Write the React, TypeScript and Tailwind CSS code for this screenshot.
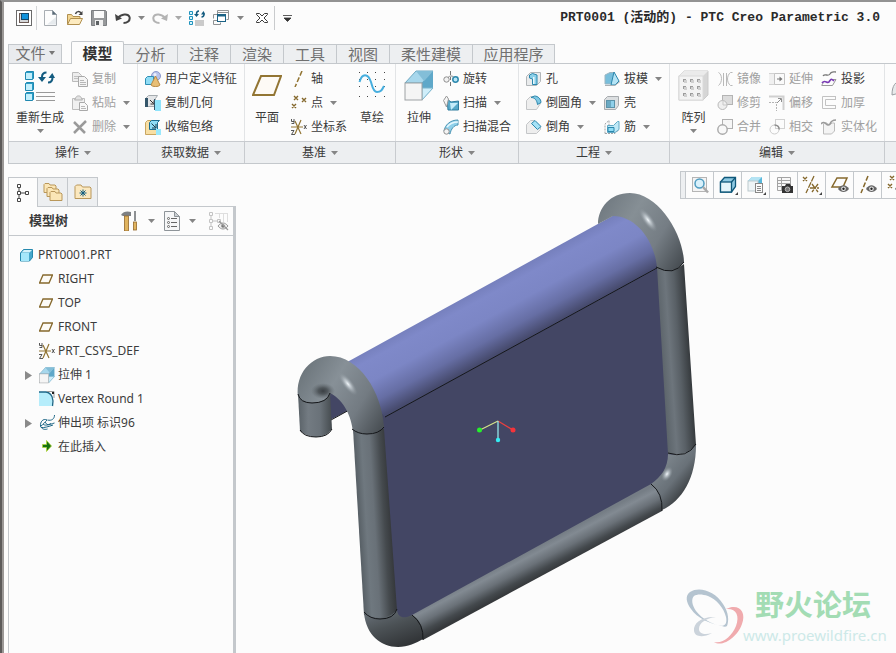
import React from "react";

type IconProps = { w?: number; h?: number; children: React.ReactNode };

function Svg({ w = 16, h = 16, children }: IconProps) {
  return (
    <svg width={w} height={h} viewBox={`0 0 ${w} ${h}`} fill="none" className="shrink-0" aria-hidden="true">
      {children}
    </svg>
  );
}

function Caret({ dim = false }: { dim?: boolean }) {
  return (
    <svg width="7" height="4" viewBox="0 0 7 4" className="shrink-0" aria-hidden="true">
      <path d="M0 0h7L3.5 4z" fill={dim ? "#a9a9a9" : "#858585"} />
    </svg>
  );
}

/* ---------- quick access icons ---------- */

const LogoIcon = () => (
  <Svg>
    <rect x="0.5" y="0.5" width="15" height="15" stroke="#6a6a6a" fill="#fff" />
    <rect x="3.500" y="3.500" width="9" height="9" stroke="#6b5a55" fill="#d4d6d8" />
    <rect x="5.500" y="3.500" width="7" height="6" fill="#1193dc" stroke="#14496b" />
  </Svg>
);
const NewIcon = () => (
  <Svg w={14}>
    <path d="M.5.5h8l4 4v11H.5z" fill="#fdfdfd" stroke="#a9aeb3" />
    <path d="M8.500.5v4h4z" fill="#5b6b78" stroke="#8a959e" />
    <path d="M3 14.500h9V7z" fill="#e6eaed" />
  </Svg>
);
const OpenIcon = () => (
  <Svg>
    <path d="M.5 14.500v-10h4l1.500 2h7v3" fill="#f3d693" stroke="#b08f4f" />
    <path d="M.5 14.500l3-6h12l-3 6z" fill="#fdebc0" stroke="#b08f4f" />
    <path d="M8.500 4c1-3 4-3 5.500-1" stroke="#444" strokeWidth="1.500" />
    <path d="M15.500 1v4h-4z" fill="#444" />
  </Svg>
);
const SaveIcon = () => (
  <Svg>
    <path d="M.5.5h14l1 1v14H.5z" fill="#97999b" stroke="#7c7f82" />
    <rect x="3" y="1" width="10" height="7" fill="#fafafa" />
    <rect x="4" y="10" width="8" height="6" fill="#f1f1f1" />
    <rect x="5" y="11" width="3" height="4" fill="#5e6265" />
  </Svg>
);
const UndoIcon = ({ color }: { color: string }) => (
  <Svg>
    <path d="M3 8c3-4 10-5 11.500-1 1 4-2.500 6-6 6" stroke={color} strokeWidth="2" />
    <path d="M0 4l1 7 6-2.500z" fill={color} />
  </Svg>
);
const RedoIcon = ({ color }: { color: string }) => (
  <Svg>
    <path d="M13 8C10 4 3 3 1.500 7c-1 4 2.500 6 6 6" stroke={color} strokeWidth="2" />
    <path d="M16 4l-1 7-6-2.500z" fill={color} />
  </Svg>
);
const WindowsIcon = () => (
  <Svg>
    <path d="M4.500 5V.5h11v9h-2M15.500 2.500h-11" stroke="#8f9294" />
    <path d="M.5 4.500h4M.5 4.500v4M.5 14.500v-4h4M.5 14.500h7v-2" stroke="#8f9294" />
    <rect x="4.500" y="4.500" width="8" height="7" fill="#fff" stroke="#1a6285" />
    <path d="M4 5.500h9" stroke="#1a6285" strokeWidth="2" />
  </Svg>
);
const CloseIcon = () => (
  <Svg w={12} h={12}>
    <path d="M.5 1.500h3L6 4l2.500-2.500h3v1L8 6l3.500 3.500v1h-3L6 8l-2.500 2.500h-3v-1L4 6 .5 2.500z" stroke="#3c3c3c" fill="#fff" />
  </Svg>
);
const RegenIcon = () => (
  <Svg>
    <path d="M.5 1.500h3v3h-3zM.5 6.500h3v3h-3zM.5 11.500h3v3h-3z" fill="#d5f4fd" stroke="#1e93bd" />
    <path d="M6 11h9M6 13h9M6 15h9" stroke="#999" />
    <path d="M10 1C8 1 7.500 2.500 7.500 4M12.500 7c2 0 2.500-1.500 2.500-3" stroke="#145c80" strokeWidth="1.500" />
    <path d="M5 4h5L7.500 7zM12 4.500h4.500L14.500 1z" fill="#145c80" />
  </Svg>
);
const RegenBigIcon = () => (
  <Svg w={30} h={32}>
    {[1, 12, 22].map((y) => (
      <g key={y}>
        <path d={`M.5 ${y + 1.5}l1-1h7v7l-1 1h-7z`} fill="#2a9cc6" stroke="#2089b0" />
        <rect x="1" y={y + 2} width="6" height="6" fill="#c3effc" />
      </g>
    ))}
    <path d="M11 22.500h19M11 26.500h19M11 30.500h19" stroke="#999" />
    <path d="M21.500 2.500C18 2.500 17 4.500 17 7M23 12.500c3.500 0 4.500-2 4.500-5" stroke="#145c80" strokeWidth="2" />
    <path d="M13 7h8l-4 5zM23.500 8H30l-2.700-5z" fill="#145c80" />
  </Svg>
);

/* ---------- ribbon icons ---------- */

const CopyIcon = () => (
  <Svg>
    <path d="M.5 1.500h6l3 3v6h-9z" fill="#ededed" stroke="#bababa" />
    <path d="M2 5.500h5M2 7.500h5" stroke="#c0c0c0" />
    <path d="M6.500 5.500h6l3 3v7h-9z" fill="#f4f4f4" stroke="#a9a9a9" />
    <path d="M8 9.500h4M8 11.500h6M8 13.500h6" stroke="#b6b6b6" />
  </Svg>
);
const PasteIcon = () => (
  <Svg>
    <path d="M.5 3.500h12v11H.5z" fill="#f0f0f0" stroke="#bdbdbd" />
    <path d="M3.500 3.500C4 0 9 0 9.500 3.500l1 1.500h-8z" fill="#e2e2e2" stroke="#b0b0b0" />
    <path d="M7.500 7.500h5l3 3v5h-8z" fill="#f8f8f8" stroke="#a9a9a9" />
    <path d="M9 11.500h4M9 13.500h5" stroke="#b8b8b8" />
  </Svg>
);
const DeleteIcon = () => (
  <Svg>
    <path d="M2 3l11 11M14 2L2 14" stroke="#9a9a9a" strokeWidth="2.500" />
  </Svg>
);
const UdfIcon = () => (
  <Svg>
    <circle cx="11" cy="5" r="4.500" fill="#b9c3ea" stroke="#8c98cc" />
    <circle cx="10" cy="3.500" r="1.500" fill="#eef1fc" />
    <path d="M.5 7.500l2-2h6v6l-2 2h-6z" fill="#8fdcf5" stroke="#2f8fb4" />
    <path d="M10.500 5l4.500 9c-1 2-8 2-9 0z" fill="#e8bf76" stroke="#b98a44" />
  </Svg>
);
const CopyGeomIcon = () => (
  <Svg>
    <path d="M.5 3.500l3-3h9l-2 3v8H.5z" fill="#e4e6e8" stroke="#a5abaf" />
    <rect x="0" y="3" width="3" height="9" fill="#35566a" />
    <path d="M5 5l3.500 3.500M9 5.500V9H5.500" stroke="#333" />
    <rect x="10" y="5" width="6" height="11" fill="#8fe3fb" />
    <path d="M9.500 4v11" stroke="#35566a" />
  </Svg>
);
const ShrinkIcon = () => (
  <Svg>
    <path d="M.5 3.500l2-2h4v9H13v5H.5z" fill="#f8dfa4" stroke="#c9a660" />
    <path d="M4.500 3.500l2-2h8l-2 2v7h-8z" fill="#8fdcf5" stroke="#1c6d90" />
    <path d="M6.500 4.500l4 4M11 5v4H7" stroke="#1b3b4b" />
    <rect x="11" y="10" width="5" height="6" fill="#9ae8fc" />
  </Svg>
);
const PlaneIcon = ({ big = false }: { big?: boolean }) =>
  big ? (
    <Svg w={30} h={32}>
      <path d="M9 6h20l-7 19H1z" stroke="#927533" strokeWidth="2" fill="#fdfaf5" />
    </Svg>
  ) : (
    <Svg w={14} h={10}>
      <path d="M4 1h9.500L10 9H.5z" stroke="#85682c" strokeWidth="1.300" fill="#fdfbf6" />
    </Svg>
  );
const AxisIcon = () => (
  <Svg>
    <path d="M11 0L4 16" stroke="#927533" strokeWidth="1.500" strokeDasharray="5 2" />
  </Svg>
);
const PointIcon = () => (
  <Svg>
    <path d="M3 1l4 4M7 1L3 5M11 3l4 4M15 3l-4 4M1 9l4 4M5 9l-4 4" stroke="#85682c" strokeWidth="1.400" />
  </Svg>
);
const CsysIcon = () => (
  <Svg>
    <path d="M0 8h12M4 2l6 13M10 1L4 15" stroke="#927533" strokeWidth="1.200" />
    <path d="M.5 0v2.500h2.500M3 0v4.500H.5M0 11.500h3L.5 15.500H4M13 6l2.500 4M15.500 6L13 10" stroke="#444" strokeWidth=".9" />
  </Svg>
);
const SketchIcon = () => (
  <Svg w={28} h={32}>
    {[2, 9, 16, 26].flatMap((y) =>
      [1, 9, 17, 26].map((x) => <rect key={`${x}-${y}`} x={x} y={y} width="1" height="1" fill="#444" />)
    )}
    <path d="M1.500 12C4 3 10 3 13 12c1 3 2 10 6 10 4 0 5-2 7-6" stroke="#46aede" strokeWidth="2" />
  </Svg>
);
const ExtrudeIcon = ({ big = false }: { big?: boolean }) => (
  <svg width={big ? 30 : 16} height={big ? 32 : 17} viewBox="0 0 30 32" fill="none" aria-hidden="true">
    <path d="M1 13L12 1h17L18 13z" fill="#a7d7ec" stroke="#6fa9c2" />
    <path d="M18 13L29 1v17L18 30z" fill="#5fa8c9" />
    <path d="M29 18L18 30V18z" fill="#cfeefa" stroke="#7db6ce" />
    <path d="M12 1l8 10 9-10z" fill="#83bed8" />
    <rect x="1" y="13" width="17" height="17" fill="#f5f5f5" stroke="#9da1a4" />
  </svg>
);
const RevolveIcon = () => (
  <Svg>
    <circle cx="3.500" cy="8.500" r="2.700" fill="#f2f2f2" stroke="#8f8f8f" />
    <circle cx="12.500" cy="8.500" r="2.700" fill="#b9e6f6" stroke="#2b87ad" strokeWidth="1.500" />
    <path d="M7.500 0v4M7.500 6v3M7.500 11v4" stroke="#777" />
    <path d="M5 6.500c2-2 4-2 5.500-.5" stroke="#888" />
  </Svg>
);
const SweepIcon = () => (
  <Svg>
    <path d="M4 4l4 3 7.500-1v9H5z" fill="#58a9c9" stroke="#2e7c9e" />
    <path d="M7 8h8l-7 7z" fill="#c4ecfa" />
    <path d="M.5 5.500l3-4.500 2 3-2 8z" fill="#f5f5f5" stroke="#9a9a9a" />
  </Svg>
);
const SweepBlendIcon = () => (
  <Svg>
    <path d="M1 12C2 6 7 1 15 1v5c-4 0-7 4-8 9z" fill="#8fd0ea" stroke="#4a93b2" />
    <path d="M4 8c3-4 6-5 11-5" stroke="#e5f7fd" strokeWidth="1.500" />
    <circle cx="3.500" cy="12.500" r="2.700" fill="#f4f4f4" stroke="#8f8f8f" />
  </Svg>
);
const HoleIcon = () => (
  <Svg>
    <path d="M.5 5.500l4-4h10v9l-4 4H.5z" fill="#e9ebec" stroke="#b2b6b9" />
    <path d="M3.500 4l3-1.500L11 4v9.500H6.500V8l-3-1z" fill="#8bd0e9" stroke="#2b87ad" />
    <path d="M7.800 6v7" stroke="#fff" strokeWidth="1.200" />
  </Svg>
);
const RoundIcon = () => (
  <Svg>
    <path d="M.5 5.500l4-4h4c4 1 6 4 6 7l-4 6H.5z" fill="#eee" stroke="#c4c6c8" />
    <path d="M5 2.500c4 0 6 3 6.500 7l3.500-2C15 4 12 1 8.500 1z" fill="#7fc8e4" stroke="#2b87ad" />
  </Svg>
);
const ChamferIcon = () => (
  <Svg>
    <path d="M.5 5.500l4-4h4l6 6v3l-4 4H.5z" fill="#eee" stroke="#c4c6c8" />
    <path d="M5.500 4.500l3.500-3 6 6-3.500 3z" fill="#a5e2f6" stroke="#2b87ad" />
  </Svg>
);
const DraftIcon = () => (
  <Svg>
    <path d="M1 4l5-2.500h4V13H1z" fill="#78bedb" stroke="#9cb6c2" />
    <path d="M10 1l5 9-4 4H7z" fill="#b5e4f5" stroke="#2b87ad" />
    <path d="M1 14.500h10l5-4" stroke="#aab0b4" />
  </Svg>
);
const ShellIcon = () => (
  <Svg>
    <path d="M.5 4.500l3-3h11v9l-3 4H.5z" fill="#dcdfe1" stroke="#a7abae" />
    <rect x="2.500" y="5.500" width="8" height="7" fill="#8fd0ea" stroke="#5c93a9" />
    <path d="M3 6h4v6H3z" fill="#6aa9c3" />
  </Svg>
);
const RibIcon = () => (
  <Svg>
    <path d="M1 14.500V5l4-3.500v9.500M1 14.500h10l4-4" stroke="#a0a4a7" strokeDasharray="2 1" />
    <path d="M3.500 6.500h6l4-4h1.500v8l-4 3h-7.500z" fill="#bfe9f7" stroke="#63aac6" />
    <path d="M4 8.500h6v4H4z" fill="#8fdcf5" stroke="#2b87ad" />
  </Svg>
);
const PatternIcon = () => (
  <Svg w={31} h={32}>
    <path d="M1 6l5-5h24v24l-5 5H1z" fill="#d6d6d6" stroke="#cbcbcb" />
    <path d="M1 6l5-5h24l-5 5z" fill="#ebebeb" />
    <rect x="1" y="6" width="24" height="24" fill="#f3f3f3" stroke="#dadada" />
    {[9, 16, 23].flatMap((y) =>
      [5, 12, 19].map((x) => (
        <g key={`${x}-${y}`}>
          <rect x={x} y={y} width="3" height="3" fill="#9c9c9c" />
          <rect x={x + 1} y={y + 1} width="3" height="3" fill="#d0d0d0" />
        </g>
      ))
    )}
  </Svg>
);
const MirrorIcon = () => (
  <Svg>
    <path d="M1.500 1.500c4 2 4 10 0 13M6.500 2v13M9.500 2v13M15.500 1.500h-2c-4 3-4 10 0 13h2" stroke="#b9b9b9" />
  </Svg>
);
const TrimIcon = () => (
  <Svg>
    <rect x="5.500" y=".5" width="10" height="9" fill="#dcdcdc" stroke="#b4b4b4" />
    <circle cx="5.500" cy="10" r="4.500" fill="#efefef" stroke="#b9b9b9" />
    <path d="M6 5.500V10h4.500" stroke="#c9c9c9" />
  </Svg>
);
const MergeIcon = () => (
  <Svg>
    <rect x="5.500" y=".5" width="10" height="9" fill="#f6f6f6" stroke="#b0b0b0" />
    <circle cx="5.500" cy="10.500" r="4.700" fill="#f8f8f8" stroke="#a9a9a9" strokeWidth="1.400" />
  </Svg>
);
const ExtendIcon = () => (
  <Svg>
    <path d="M0 2.500h5.500v11H0" fill="#f0f0f0" stroke="#d2d2d2" />
    <path d="M5.500 2.500h10v11h-10z" fill="#fafafa" stroke="#c4c4c4" />
    <path d="M8 8h4" stroke="#777" />
    <path d="M10.500 5.500l3 2.500-3 2.500z" fill="#777" />
  </Svg>
);
const OffsetIcon = () => (
  <Svg>
    <path d="M0 1.500h14.500V15" stroke="#d0d0d0" strokeWidth="2" />
    <path d="M0 7.500h7.500V16" stroke="#b5b5b5" strokeDasharray="2 1" />
    <path d="M8 8l4-4M9 3.500h3.500V7" stroke="#8f8f8f" />
  </Svg>
);
const IntersectIcon = () => (
  <Svg>
    <rect x="6.500" y=".5" width="9" height="9" stroke="#d2d2d2" />
    <circle cx="5.500" cy="10.500" r="4.500" stroke="#cccccc" />
    <path d="M5.500 6c3 0 5 2 4.500 4.500" stroke="#8d8d8d" strokeWidth="1.500" />
  </Svg>
);
const ProjectIcon = () => (
  <Svg>
    <path d="M2 5c2-3 5 1 7-2 1-3 4-2 6-2" stroke="#777" strokeWidth="1.300" />
    <path d="M.5 14.500l2-3M1 14.500h10.500l3.500-6h-3" stroke="#999" />
    <path d="M1 12c3-4 5 1 7-1 2-3 2-4 5-1" stroke="#7a3bb5" strokeWidth="1.600" />
  </Svg>
);
const ThickenIcon = () => (
  <Svg>
    <path d="M15 1.500H1.500v12H15M15 4.500H4.500v6H15M14.500 1v4M14.500 10v4" stroke="#c2c2c2" />
  </Svg>
);
const SolidifyIcon = () => (
  <Svg>
    <path d="M2.500 15V5c3-4 4 2 7 0l2-1h2v8l-3 3z" fill="#f4f4f4" stroke="#bcbcbc" />
    <path d="M0 5c4-5 6 4 9 0 1-3 3-4 6-4" stroke="#9a9a9a" strokeWidth="1.600" />
  </Svg>
);

/* ---------- ribbon structure ---------- */

type Item = { label: string; icon: React.ReactNode; caret?: boolean; dim?: boolean };

function SmallColumn({ items, className }: { items: Item[]; className?: string }) {
  return (
    <div className={`flex flex-col items-start pt-[3px] ${className ?? ""}`}>
      {items.map((it) => (
        <button
          key={it.label}
          disabled={it.dim}
          className={`flex h-6 items-center whitespace-nowrap ${it.dim ? "text-[#a0a0a0]" : "text-[#3a3a3a]"}`}
        >
          {it.icon}
          <span className="mr-[7px] ml-1 leading-4">{it.label}</span>
          {it.caret && <Caret />}
        </button>
      ))}
    </div>
  );
}

function BigButton({ item, className }: { item: Item; className?: string }) {
  return (
    <button className={`flex flex-col items-center pt-[6px] whitespace-nowrap text-[#3a3a3a] ${className ?? ""}`}>
      {item.icon}
      <span className="mt-2 mb-[3px] leading-4">{item.label}</span>
      {item.caret && <Caret />}
    </button>
  );
}

function Group({ title, className, children }: { title: string; className: string; children: React.ReactNode }) {
  return (
    <section className={`flex shrink-0 flex-col ${className}`}>
      <div className="flex h-[77px] items-start border-r border-[#e2e4e6]">{children}</div>
      <button className="flex h-[22px] items-center justify-center gap-[5px] border-t border-r border-[#c8cbcf] bg-[#edeff1] text-[#3a3a3a]">
        <span>{title}</span>
        <Caret />
      </button>
    </section>
  );
}

const TABS: { label: string; width: string }[] = [
  { label: "分析", width: "w-[54px]" },
  { label: "注释", width: "w-[53px]" },
  { label: "渲染", width: "w-[53px]" },
  { label: "工具", width: "w-[53px]" },
  { label: "视图", width: "w-[53px]" },
  { label: "柔性建模", width: "w-[83px]" },
  { label: "应用程序", width: "w-[82px]" },
];

function QuickAccess() {
  return (
    <div className="flex h-8 items-center pl-2">
      <button aria-label="Creo" className="flex w-6 justify-center"><LogoIcon /></button>
      <span className="mr-[2px] h-6 w-px bg-[#d3d5d7]" />
      <button aria-label="新建" className="flex w-6 justify-center"><NewIcon /></button>
      <button aria-label="打开" className="flex w-6 justify-center"><OpenIcon /></button>
      <button aria-label="保存" className="flex w-6 justify-center"><SaveIcon /></button>
      <button aria-label="撤消" className="flex w-6 justify-center"><UndoIcon color="#444" /></button>
      <button aria-label="撤消列表" className="flex w-[13px] justify-center"><Caret /></button>
      <button aria-label="重做" className="flex w-6 justify-center"><RedoIcon color="#b3b3b3" /></button>
      <button aria-label="重做列表" className="flex w-[13px] justify-center"><Caret dim /></button>
      <button aria-label="重新生成模型" className="flex w-6 justify-center"><RegenIcon /></button>
      <button aria-label="窗口" className="flex w-6 justify-center"><WindowsIcon /></button>
      <button aria-label="窗口列表" className="flex w-[15px] justify-center"><Caret /></button>
      <button aria-label="关闭" className="ml-[2px] flex w-6 justify-center"><CloseIcon /></button>
      <span className="h-6 w-px bg-[#c9cbcd]" />
      <button aria-label="自定义快速访问工具栏" className="flex w-6 justify-center">
        <Svg w={9} h={7}><path d="M0 .5h9M1 3h7L4.500 6.500z" fill="#333" stroke="#333" strokeWidth=".8" /></Svg>
      </button>
    </div>
  );
}

function Ribbon() {
  return (
    <nav className="-mt-px ml-1 flex h-[101px] overflow-hidden border-y border-l border-[#c4c8cc] text-[12px] leading-4">
      <Group title="操作" className="w-[129px]">
        <BigButton className="ml-[7px]" item={{ label: "重新生成", icon: <RegenBigIcon />, caret: true }} />
        <SmallColumn
          className="ml-2"
          items={[
            { label: "复制", icon: <CopyIcon />, dim: true },
            { label: "粘贴", icon: <PasteIcon />, dim: true, caret: true },
            { label: "删除", icon: <DeleteIcon />, dim: true, caret: true },
          ]}
        />
      </Group>
      <Group title="获取数据" className="w-[107px]">
        <SmallColumn
          className="ml-[7px]"
          items={[
            { label: "用户定义特征", icon: <UdfIcon /> },
            { label: "复制几何", icon: <CopyGeomIcon /> },
            { label: "收缩包络", icon: <ShrinkIcon /> },
          ]}
        />
      </Group>
      <Group title="基准" className="w-[151px]">
        <BigButton className="ml-[7px]" item={{ label: "平面", icon: <PlaneIcon big /> }} />
        <SmallColumn
          className="ml-[9px]"
          items={[
            { label: "轴", icon: <AxisIcon /> },
            { label: "点", icon: <PointIcon />, caret: true },
            { label: "坐标系", icon: <CsysIcon /> },
          ]}
        />
        <BigButton className="ml-1" item={{ label: "草绘", icon: <SketchIcon /> }} />
      </Group>
      <Group title="形状" className="w-[123px]">
        <BigButton className="ml-2" item={{ label: "拉伸", icon: <ExtrudeIcon big /> }} />
        <SmallColumn
          className="ml-[9px]"
          items={[
            { label: "旋转", icon: <RevolveIcon /> },
            { label: "扫描", icon: <SweepIcon />, caret: true },
            { label: "扫描混合", icon: <SweepBlendIcon /> },
          ]}
        />
      </Group>
      <Group title="工程" className="w-[151px]">
        <SmallColumn
          className="ml-[7px] w-[78px]"
          items={[
            { label: "孔", icon: <HoleIcon /> },
            { label: "倒圆角", icon: <RoundIcon />, caret: true },
            { label: "倒角", icon: <ChamferIcon />, caret: true },
          ]}
        />
        <SmallColumn
          items={[
            { label: "拔模", icon: <DraftIcon />, caret: true },
            { label: "壳", icon: <ShellIcon /> },
            { label: "筋", icon: <RibIcon />, caret: true },
          ]}
        />
      </Group>
      <Group title="编辑" className="w-[215px]">
        <BigButton className="ml-2" item={{ label: "阵列", icon: <PatternIcon />, caret: true }} />
        <SmallColumn
          className="ml-2 w-[52px]"
          items={[
            { label: "镜像", icon: <MirrorIcon />, dim: true },
            { label: "修剪", icon: <TrimIcon />, dim: true },
            { label: "合并", icon: <MergeIcon />, dim: true },
          ]}
        />
        <SmallColumn
          className="w-[52px]"
          items={[
            { label: "延伸", icon: <ExtendIcon />, dim: true },
            { label: "偏移", icon: <OffsetIcon />, dim: true },
            { label: "相交", icon: <IntersectIcon />, dim: true },
          ]}
        />
        <SmallColumn
          items={[
            { label: "投影", icon: <ProjectIcon /> },
            { label: "加厚", icon: <ThickenIcon />, dim: true },
            { label: "实体化", icon: <SolidifyIcon />, dim: true },
          ]}
        />
      </Group>
      <div className="flex flex-1 flex-col">
        <div className="h-[77px] pt-[14px] pl-[6px]">
          <Svg w={16} h={18}><path d="M1 17C1 8 4 3 12 2v12z" fill="#e8eaeb" stroke="#9a9fa3" /></Svg>
        </div>
        <div className="h-[22px] border-t border-[#c8cbcf] bg-[#edeff1]" />
      </div>
    </nav>
  );
}

/* ---------- model tree ---------- */

const Folder = ({ x, y }: { x: number; y: number }) => (
  <path transform={`translate(${x} ${y})`} d="M0 9.500V1.500L1 .5h4l1 1.500h5l1 1v6.500z" fill="#fbe6b6" stroke="#b9975a" />
);

const TREE: { label: string; icon: React.ReactNode; expandable?: boolean }[] = [
  { label: "RIGHT", icon: <PlaneIcon /> },
  { label: "TOP", icon: <PlaneIcon /> },
  { label: "FRONT", icon: <PlaneIcon /> },
  { label: "PRT_CSYS_DEF", icon: <CsysIcon /> },
  { label: "拉伸 1", icon: <ExtrudeIcon />, expandable: true },
  {
    label: "Vertex Round 1",
    icon: (
      <Svg>
        <path d="M0 1h8c4 2 6 6 5 14H0z" fill="#b6edfb" />
        <path d="M0 1h7c6 1 8 7 6.500 14" stroke="#1d6686" strokeWidth="1.300" />
        <path d="M8 .5h7V7" stroke="#999" />
        <rect x="13" y="1" width="2" height="2" fill="#222" />
      </Svg>
    ),
  },
  {
    label: "伸出项 标识96",
    icon: (
      <Svg>
        <path d="M8 5C4 3 1 7 1.500 11c1 3 4 4 7 3M8 5c-2 2-4 5-6.500 6M6 7l2 2.500c2 1 5-1 7.500-1.500M15.500 0c0 4-3 6-7 5M4 9c2 2 5 1 8-.5M2 12.500c3 .5 8-1 12-2.500" stroke="#1d6686" />
      </Svg>
    ),
    expandable: true,
  },
  {
    label: "在此插入",
    icon: (
      <Svg>
        <path d="M3.500 5.500h4v-4l5 5.500-5 5.500v-4h-4z" fill="#15720f" stroke="#b3d63b" strokeWidth=".8" />
      </Svg>
    ),
  },
];

function ModelTree() {
  return (
    <aside className="ml-1 flex w-[228px] shrink-0 flex-col pt-[13px]">
      <div role="tablist" className="flex">
        <button role="tab" aria-selected="true" aria-label="模型树" className="relative -mb-px flex h-[30px] w-[30px] items-center justify-center border-x border-t border-[#c4c8cc] bg-[#fcfcfc]">
          <Svg w={14} h={20}>
            <path d="M3 5v10M5 10h4" stroke="#444" />
            <path d="M1.500 1.500h3v3h-3zM1.500 8.500h3v3h-3zM1.500 15.500h3v3h-3zM9.500 8.500h3v3h-3z" fill="#fff" stroke="#444" />
          </Svg>
        </button>
        <button role="tab" aria-selected="false" aria-label="文件夹浏览器" className="flex h-[29px] w-[30px] items-center justify-center border-t border-r border-[#c4c8cc] bg-[#edeff1]">
          <Svg w={20} h={20}>
            <Folder x={1} y={1} />
            <Folder x={4} y={5} />
            <Folder x={7} y={9} />
          </Svg>
        </button>
        <button role="tab" aria-selected="false" aria-label="收藏夹" className="flex h-[29px] w-[30px] items-center justify-center border-t border-r border-[#c4c8cc] bg-[#edeff1]">
          <Svg w={18} h={16}>
            <path d="M1 14.500v-12L2.500 1H7l1.500 2H16l1 1v10.500z" fill="#fbe8bf" stroke="#b9975a" />
            <path d="M9 5.500v7M5.500 9h7M6.500 6.500l5 5M11.500 6.500l-5 5" stroke="#0f5c7f" />
          </Svg>
        </button>
      </div>
      <div className="flex flex-1 flex-col border-t border-r-3 border-l border-[#c4c8cc]">
        <div className="flex h-[29px] items-center border-b border-[#c4c8cc] pr-1 pl-5 text-[13px] text-[#3a3a3a]">
          <h2 className="flex-1 font-bold">模型树</h2>
          <button aria-label="设置">
            <Svg w={18} h={20}>
              <path d="M0 4c2-4 7-4 10-3v4H2z" fill="#7d8083" />
              <rect x="3.500" y="5" width="4" height="15" fill="#e0b45f" stroke="#93682b" strokeWidth=".8" />
              <rect x="13" y="0" width="2" height="10" fill="#8d9093" />
              <rect x="12.500" y="11" width="3" height="8" fill="#e0b45f" stroke="#93682b" strokeWidth=".8" />
            </Svg>
          </button>
          <span className="mx-[9px]"><Caret /></span>
          <button aria-label="显示">
            <Svg w={16} h={20}>
              <path d="M.5.5h10l5 5v14H.5z" fill="#f6f7f8" stroke="#8e9499" />
              <path d="M10.500.5v5h5z" fill="#c9ced2" stroke="#8e9499" />
              <path d="M7 7.500h6M7 11.500h6M7 15.500h6" stroke="#666" />
              <circle cx="4.500" cy="7.500" r="1" stroke="#666" />
              <circle cx="4.500" cy="11.500" r="1" stroke="#666" />
              <circle cx="4.500" cy="15.500" r="1" stroke="#666" />
            </Svg>
          </button>
          <span className="mr-3 ml-[9px]"><Caret /></span>
          <button aria-label="隐藏" disabled>
            <Svg w={21} h={20}>
              <path d="M1.500 1.500h3v3h-3zM1.500 8.500h3v3h-3zM1.500 15.500h3v3h-3zM9.500 8.500h3v3h-3zM3 5v3M3 12v3M5 10h4" stroke="#c4c4c4" />
              <path d="M7 2.500h13M11.500 3v4M15.500 3v8M19.500 3v8" stroke="#dedede" />
              <path d="M10 15c3-4 7-4 10 0-3 4-7 4-10 0z" fill="#eee" stroke="#999" />
              <circle cx="15" cy="15" r="1.800" fill="#777" />
              <path d="M11 10l9 9" stroke="#999" strokeWidth="1.300" />
            </Svg>
          </button>
        </div>
        <ul className="pt-[7px] text-[12px] leading-6 text-[#3c3c3c]">
          <li>
            <div className="flex h-6 items-center gap-[5px] pl-[11px]">
              <Svg w={13} h={13}>
                <path d="M.5 4l3-3.500h9v8L9.500 12h-9z" fill="#47a8cc" stroke="#2689ae" />
                <rect x="1" y="4" width="8" height="8" fill="#a5e8fb" />
                <path d="M1.500 3.500L4 1h8L9.500 3.500z" fill="#d4f3fc" />
              </Svg>
              <span>PRT0001.PRT</span>
            </div>
            <ul>
              {TREE.map((row) => (
                <li key={row.label} className="flex h-6 items-center pl-4">
                  <span className="flex w-[14px] shrink-0">
                    {row.expandable && (
                      <Svg w={8} h={9}><path d="M0 0v9l7-4.500z" fill="#8a8a8a" /></Svg>
                    )}
                  </span>
                  <span className="mr-[3px] flex w-4">{row.icon}</span>
                  <span>{row.label}</span>
                </li>
              ))}
            </ul>
          </li>
        </ul>
      </div>
    </aside>
  );
}

/* ---------- graphics area ---------- */

const Eye = ({ x, y }: { x: number; y: number }) => (
  <g transform={`translate(${x} ${y})`}>
    <path d="M0 4c3-5 8-5 11 0-3 4-8 4-11 0z" fill="#666" />
    <circle cx="5.500" cy="3.800" r="2.300" fill="#eee" />
    <circle cx="5.500" cy="3.800" r="1.200" fill="#222" />
  </g>
);
const Corner = () => <path d="M20 17v3h-3z" fill="#444" />;

const VIEW_TOOLS: { name: string; art: React.ReactNode }[] = [
  {
    name: "重新调整",
    art: (
      <>
        <rect x="2.500" y="2.500" width="14" height="14" fill="#f4f4f4" stroke="#b5b5b5" />
        <circle cx="9.500" cy="8.500" r="4.500" fill="#d9f1fb" stroke="#4f9cc0" strokeWidth="1.500" />
        <path d="M13 12l5 5.500" stroke="#aaa" strokeWidth="2.500" />
      </>
    ),
  },
  {
    name: "显示样式",
    art: (
      <>
        <path d="M2.500 7l4-4.500h11v9l-4 5.500h-11z" fill="#8ec9e2" stroke="#0f587a" strokeWidth="1.300" />
        <rect x="2.500" y="7" width="11" height="10" fill="#e3f4fa" stroke="#0f587a" strokeWidth="1.300" />
        <path d="M13.500 7l4-4.500" stroke="#0f587a" strokeWidth="1.300" />
        <Corner />
      </>
    ),
  },
  {
    name: "已保存方向",
    art: (
      <>
        <path d="M2 6l4-4h10v10l-4 4H2z" fill="#58b7db" />
        <path d="M2 6l4-4h10l-4 4z" fill="#b4e3f3" />
        <rect x="2" y="6" width="10" height="10" fill="#eef4f6" stroke="#bcc9ce" />
        <rect x="9.500" y="8.500" width="7" height="9" fill="#fafafa" stroke="#888" />
        <path d="M11 11.500h4M11 13.500h4M11 15.500h4" stroke="#888" />
        <Corner />
      </>
    ),
  },
  {
    name: "视图管理器",
    art: (
      <>
        <path d="M3.500 2.500h13v13h-13zM3.500 5.500h13M3.500 8.500h13M3.500 11.500h13M7.500 2v13" fill="#f8f8f8" stroke="#a4a4a4" />
        <path d="M8 11h3l1-2h4l1 2h2v7H8z" fill="#333" />
        <circle cx="13.500" cy="14.300" r="2.300" fill="#777" stroke="#bbb" />
      </>
    ),
  },
  {
    name: "基准显示过滤器",
    art: (
      <>
        <path d="M1 2l4 4M5 2L1 6M12 1L4 18M8 13h9M10 9l6 8M16 9l-6 8" stroke="#85682c" strokeWidth="1.300" strokeDasharray="6 1" />
        <Corner />
      </>
    ),
  },
  {
    name: "平面显示",
    art: (
      <>
        <path d="M7 3h10l-4 9H2z" stroke="#85682c" strokeWidth="1.500" />
        <Eye x={8} y={10} />
      </>
    ),
  },
  {
    name: "轴显示",
    art: (
      <>
        <path d="M10 1L3 18" stroke="#85682c" strokeWidth="1.500" strokeDasharray="5 2" />
        <Eye x={8} y={10} />
      </>
    ),
  },
  {
    name: "点显示",
    art: (
      <>
        <path d="M4 1l4 4M8 1L4 5M12 3l4 4M16 3l-4 4M2 9l4 4M6 9l-4 4" stroke="#85682c" strokeWidth="1.400" />
        <Eye x={9} y={10} />
      </>
    ),
  },
];

const EDGE = "#15171a";

function ModelDrawing() {
  return (
    <svg width="660" height="489" viewBox="236 164 660 489" fill="none" className="block" role="img" aria-label="PRT0001">
      <defs>
        <linearGradient id="roll" gradientUnits="userSpaceOnUse" x1="480" y1="289" x2="511" y2="346">
          <stop offset="0" stopColor="#7680bd" />
          <stop offset=".15" stopColor="#7f89c9" />
          <stop offset=".45" stopColor="#7c86c5" />
          <stop offset=".75" stopColor="#666ea4" />
          <stop offset="1" stopColor="#474b6e" />
        </linearGradient>
        <linearGradient id="leftTube" gradientUnits="userSpaceOnUse" x1="358" y1="522" x2="391" y2="520">
          <stop offset="0" stopColor="#565e64" />
          <stop offset=".25" stopColor="#6f787f" />
          <stop offset=".5" stopColor="#697178" />
          <stop offset=".8" stopColor="#454a4e" />
          <stop offset="1" stopColor="#36393c" />
        </linearGradient>
        <linearGradient id="rightTube" gradientUnits="userSpaceOnUse" x1="662" y1="360" x2="691" y2="358">
          <stop offset="0" stopColor="#5d656b" />
          <stop offset=".3" stopColor="#6d757c" />
          <stop offset=".6" stopColor="#596066" />
          <stop offset="1" stopColor="#33373a" />
        </linearGradient>
        <linearGradient id="lowTube" gradientUnits="userSpaceOnUse" x1="530" y1="550" x2="543" y2="575">
          <stop offset="0" stopColor="#757d85" />
          <stop offset=".2" stopColor="#828a92" />
          <stop offset=".5" stopColor="#6a7178" />
          <stop offset=".8" stopColor="#44494d" />
          <stop offset="1" stopColor="#36393c" />
        </linearGradient>
        <linearGradient id="stub" x1="0" x2="1">
          <stop offset="0" stopColor="#596167" />
          <stop offset=".3" stopColor="#737b82" />
          <stop offset=".65" stopColor="#6a7279" />
          <stop offset="1" stopColor="#454b4f" />
        </linearGradient>
        <linearGradient id="hook" gradientUnits="userSpaceOnUse" x1="305" y1="365" x2="388" y2="415">
          <stop offset="0" stopColor="#6d767c" />
          <stop offset=".35" stopColor="#879097" />
          <stop offset=".7" stopColor="#737b82" />
          <stop offset="1" stopColor="#4b5156" />
        </linearGradient>
        <linearGradient id="hookBack" gradientUnits="userSpaceOnUse" x1="605" y1="205" x2="688" y2="256">
          <stop offset="0" stopColor="#737c83" />
          <stop offset=".3" stopColor="#868f95" />
          <stop offset=".65" stopColor="#757d84" />
          <stop offset="1" stopColor="#454b50" />
        </linearGradient>
        <linearGradient id="cornerLeft" gradientUnits="userSpaceOnUse" x1="382" y1="608" x2="396" y2="648">
          <stop offset="0" stopColor="#666e75" />
          <stop offset=".45" stopColor="#4c5256" />
          <stop offset="1" stopColor="#323538" />
        </linearGradient>
        <linearGradient id="cornerRight" gradientUnits="userSpaceOnUse" x1="659" y1="468" x2="688" y2="492">
          <stop offset="0" stopColor="#7b848b" />
          <stop offset=".5" stopColor="#697178" />
          <stop offset="1" stopColor="#373b3e" />
        </linearGradient>
        <radialGradient id="shine">
          <stop offset="0" stopColor="#f2f7fb" />
          <stop offset=".4" stopColor="#c4ccd2" stopOpacity=".7" />
          <stop offset="1" stopColor="#8a939a" stopOpacity="0" />
        </radialGradient>
        <radialGradient id="shade">
          <stop offset="0" stopColor="#3a3f43" />
          <stop offset=".4" stopColor="#444a4e" stopOpacity=".8" />
          <stop offset="1" stopColor="#5c6469" stopOpacity="0" />
        </radialGradient>
      </defs>

      <path d="M328 380h30l28 36 275-150 14 188q-4 26-20 38L411 625l-26-12-30-170-4-34-21 11z" fill="#434664" />
      <path d="M331 420l20-11" stroke={EDGE} />
      <path d="M340 366l276-152c26 4 46 26 46 52L385 417z" fill="url(#roll)" />
      <path d="M385 417l272-149" stroke={EDGE} />

      <path d="M598 224c0-16 12-31 32-31 28 0 53 40 54 69q-6 9-17 9-6 0-10-3c-2-27-21-52-44-52z" fill="url(#hookBack)" />
      <ellipse cx="648" cy="220" rx="14" ry="5" transform="rotate(54 648 220)" fill="url(#shine)" />

      <path d="M657 267q12 8 27-3l12 181q-8 12-28 9z" fill="url(#rightTube)" />
      <path d="M662 510c20-9 34-32 34-65q-12 13-28 9c0 14-7 23-17 30z" fill="url(#cornerRight)" />
      <ellipse cx="667" cy="474" rx="8" ry="5" transform="rotate(-60 667 474)" fill="url(#shine)" />
      <path d="M412 615l239-131q12 9 11 27L423 640z" fill="url(#lowTube)" />
      <path d="M364 613c2 22 17 34 34 34 10 0 18-4 25-8 1-10-3-20-11-24-8 4-14 3-15-5z" fill="url(#cornerLeft)" />
      <path d="M353 429h31l13 181q-12 13-33 5z" fill="url(#leftTube)" />

      <path d="M298 394l2 37q8 6 16 6 10 0 16-8l-2-37z" fill="url(#stub)" />
      <path d="M298 397c-3-24 14-41 32-41 29 0 52 36 54 71q-14 12-31 4c-2-14-8-30-23-38-2 10-22 13-32 4z" fill="url(#hook)" />
      <ellipse cx="323" cy="391" rx="12" ry="8" fill="url(#shade)" />
      <ellipse cx="348" cy="384" rx="14" ry="5" transform="rotate(52 348 384)" fill="url(#shine)" />

      <g stroke={EDGE}>
        <path d="M298 394q2 9 14 9 15 0 18-10" />
        <path d="M300 430q4 7 16 7 12 0 16-8" />
        <path d="M352 429q6 5 15 5 12 0 17-7" />
        <path d="M656 267q18 10 28-5" />
        <path d="M668 453q19 6 28-9" />
        <path d="M651 484q12 9 11 27" />
        <path d="M412 615q12 9 11 25" />
        <path d="M364 612q6 7 16 7 14 0 17-10" />
      </g>

      <g strokeWidth="1.200">
        <path d="M498 421l-18 9" stroke="#d8e58a" />
        <path d="M498 421l15 9" stroke="#e9403f" />
        <path d="M498 421v18" stroke="#9cf3f5" />
        <circle cx="479.500" cy="430" r="2.500" fill="#25f02b" />
        <circle cx="513" cy="430" r="2.500" fill="#f5333a" />
        <circle cx="498" cy="440" r="2.200" fill="#35ecf2" />
      </g>

      <path fillRule="evenodd" fill="#b5c4d0" d="M690 592c9-6 25-1 33 12 6 9 6 17 4 22-1 1-3 1-5 0-12-2-25-8-31-17-5-7-6-13-1-17zm4 4c-3 3-2 9 2 15 6 8 16 13 25 15 5 0 6-4 5-9-2-9-10-18-18-21-6-2-11-2-14 0z" />
      <path fill="#cbd3db" d="M716 617c-14-1-23 6-22 14 1 6 9 7 18 2-7 2-13 1-13-4 0-6 7-11 17-12z" />
      <path fill="#f0abae" d="M726 609c12-6 21 2 16 15-4 12-19 24-28 18 9 2 18-6 22-16 4-11 0-18-10-17z" />
      <text x="755" y="616" fontSize="29" fontWeight="700" fill="#a3dcb4" fontFamily="'Noto Sans CJK SC', sans-serif">野火论坛</text>
      <text x="743" y="641" fontSize="15" fill="#cde9e8" fontFamily="'Noto Sans', sans-serif">www.proewildfire.cn</text>
    </svg>
  );
}

function GraphicsArea() {
  return (
    <main className="relative min-w-0 flex-1 overflow-hidden">
      <ModelDrawing />
      <div role="toolbar" className="absolute top-[7px] right-0 flex h-7 w-[216px] overflow-hidden border-y border-l border-[#c4c8cc] bg-[#fcfcfc]">
        <span className="w-1 shrink-0 bg-[#edeff1]" />
        {VIEW_TOOLS.map((t) => (
          <button key={t.name} aria-label={t.name} className="flex w-7 shrink-0 items-center justify-center border-l border-[#c4c8cc]">
            <Svg w={20} h={20}>{t.art}</Svg>
          </button>
        ))}
      </div>
    </main>
  );
}

export default function App() {
  return (
    <div className="flex h-screen flex-col overflow-hidden border-t-2 border-l-2 border-t-[#929292] border-l-[#5d5b5a] bg-[#fcfcfc] font-['Noto_Sans','Noto_Sans_CJK_SC',sans-serif]">
      <div className="flex min-h-0 flex-1 flex-col border-l-2 border-[#9b9896]">
        <header className="flex h-[39px] shrink-0 justify-between">
          <QuickAccess />
          <h1 className="pr-4 font-['Liberation_Mono','Noto_Sans_CJK_SC',monospace] text-[13px] leading-8 font-bold whitespace-nowrap text-[#2a2a2a]">
            PRT0001 (活动的) - PTC Creo Parametric 3.0
          </h1>
        </header>
        <div role="tablist" className="ml-1 flex h-[23px] shrink-0 items-end text-[15px] leading-4 text-[#707070]">
          <button className="mr-[9px] flex h-5 w-[54px] items-center justify-center gap-[3px] border border-[#c4c8cc] bg-[#e9ebee] pb-[2px]">
            文件
            <svg width="6" height="4" viewBox="0 0 6 4" aria-hidden="true"><path d="M0 0h6L3 4z" fill="#777" /></svg>
          </button>
          <button role="tab" aria-selected="true" className="relative h-[23px] w-[53px] rounded-t-[2px] border-x border-t border-[#c4c8cc] bg-[#fcfcfc] font-bold text-[#333]">
            模型
          </button>
          {TABS.map((t) => (
            <button key={t.label} role="tab" aria-selected="false" className={`h-5 border-t border-r border-[#c4c8cc] bg-[#edeff1] pb-[2px] ${t.width}`}>
              {t.label}
            </button>
          ))}
        </div>
        <div className="shrink-0">
          <Ribbon />
        </div>
        <div className="flex min-h-0 flex-1">
          <ModelTree />
          <GraphicsArea />
        </div>
      </div>
    </div>
  );
}
